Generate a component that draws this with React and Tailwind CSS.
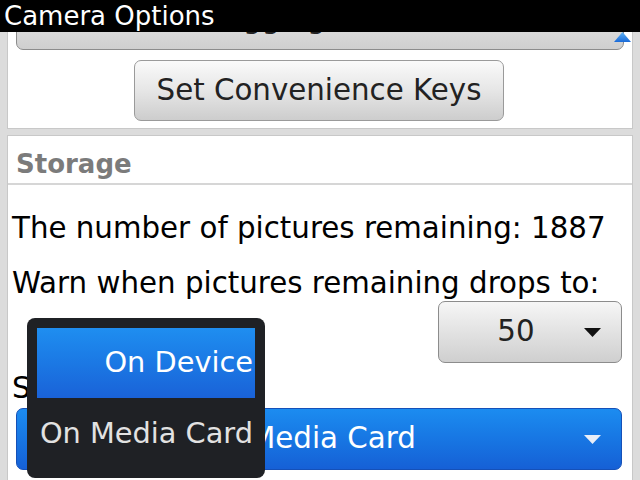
import React from "react";

const font = { fontFamily: '"DejaVu Sans", "Liberation Sans", sans-serif' };

const DownArrow = ({ color }) => (
  <svg width="17" height="9" viewBox="0 0 17 9" className="shrink-0">
    <path d="M0 0 H17 L8.5 9 Z" fill={color} />
  </svg>
);

const App = () => {
  return (
    <div
      className="relative w-[640px] h-[480px] overflow-hidden bg-[#dcdcdc] flex flex-col"
      style={font}
    >
      <div className="h-[32px] shrink-0 bg-black text-white text-[26px] leading-[32px] pl-[4px] z-10">
        Camera Options
      </div>

      <div className="flex-1 overflow-hidden">
        <div className="-mt-[54px] px-[7px]">
          {/* first section, scrolled up under the title */}
          <div className="bg-white border border-[#c8c8c8] pt-[9px] pb-[7px] flex flex-col">
            <div className="mx-[8px] h-[62px] rounded-[7px] border border-[#8c8c8c] bg-gradient-to-b from-[#f2f2f2] to-[#cfcfcf] flex items-center justify-center text-[29.3px] text-[#222]">
              Geotagging (Disabled)
            </div>
            <div className="mt-[10px] self-start ml-[126px] w-[370px] h-[61px] rounded-[7px] border border-[#9a9a9a] bg-gradient-to-b from-[#fafafa] via-[#e6e6e6] to-[#cdcdcd] flex items-center justify-center text-[29.3px] text-[#222]">
              Set Convenience Keys
            </div>
          </div>

          {/* storage section */}
          <div className="mt-[6px] bg-white border border-[#c8c8c8] h-[360px]">
            <div className="h-[49px] flex items-center pl-[8px] pt-[10px] text-[26px] font-bold text-[#7b7b7b] border-b-2 border-[#d6d6d6]">
              Storage
            </div>
            <div className="pl-[4px] pr-[10px] text-[29.3px] text-black">
              <div className="mt-[23px] leading-[40px] whitespace-nowrap">
                The number of pictures remaining: 1887
              </div>
              <div className="mt-[17px] leading-[36px] whitespace-nowrap">
                Warn when pictures remaining drops to:
              </div>
              <div className="flex justify-end">
                <div className="w-[184px] h-[62px] rounded-[7px] border border-[#8c8c8c] bg-gradient-to-b from-[#f6f6f6] to-[#cfcfcf] flex items-center pl-[9px] pr-[20px] text-[#222]">
                  <span className="flex-1 text-center">50</span>
                  <DownArrow color="#111" />
                </div>
              </div>
              <div className="mt-[7px] leading-[36px]">Store Pictures:</div>
              <div className="mt-[2px] ml-[4px] h-[62px] rounded-[7px] border border-[#1550b8] bg-gradient-to-b from-[#1c8cf0] to-[#1660d6] flex items-center pl-[20px] pr-[20px] text-white">
                <span className="flex-1 text-center pr-[6px]">On Media Card</span>
                <DownArrow color="#e8eef8" />
              </div>
            </div>
          </div>
        </div>
      </div>

      {/* scroll-up indicator */}
      <svg
        width="17"
        height="10"
        viewBox="0 0 17 10"
        className="absolute left-[614px] top-[32px]"
      >
        <defs>
          <linearGradient id="up" x1="0" y1="0" x2="0" y2="1">
            <stop offset="0" stopColor="#5fb4f6" />
            <stop offset="1" stopColor="#1a6ad8" />
          </linearGradient>
        </defs>
        <path d="M8.5 0 L17 10 H0 Z" fill="url(#up)" />
      </svg>

      {/* open choice menu */}
      <div className="absolute left-[27px] top-[318px] w-[238px] h-[160px] rounded-[8px] bg-[#1f2125] p-[10px] text-[28.8px]">
        <div className="h-[70px] bg-gradient-to-b from-[#1f8ef0] to-[#1a62d8] flex items-center justify-end pr-[2px] text-white">
          On Device
        </div>
        <div className="h-[72px] flex items-center justify-end pr-[2px] text-[#e2e2e2] whitespace-nowrap">
          On Media Card
        </div>
      </div>
    </div>
  );
};

export default App;
